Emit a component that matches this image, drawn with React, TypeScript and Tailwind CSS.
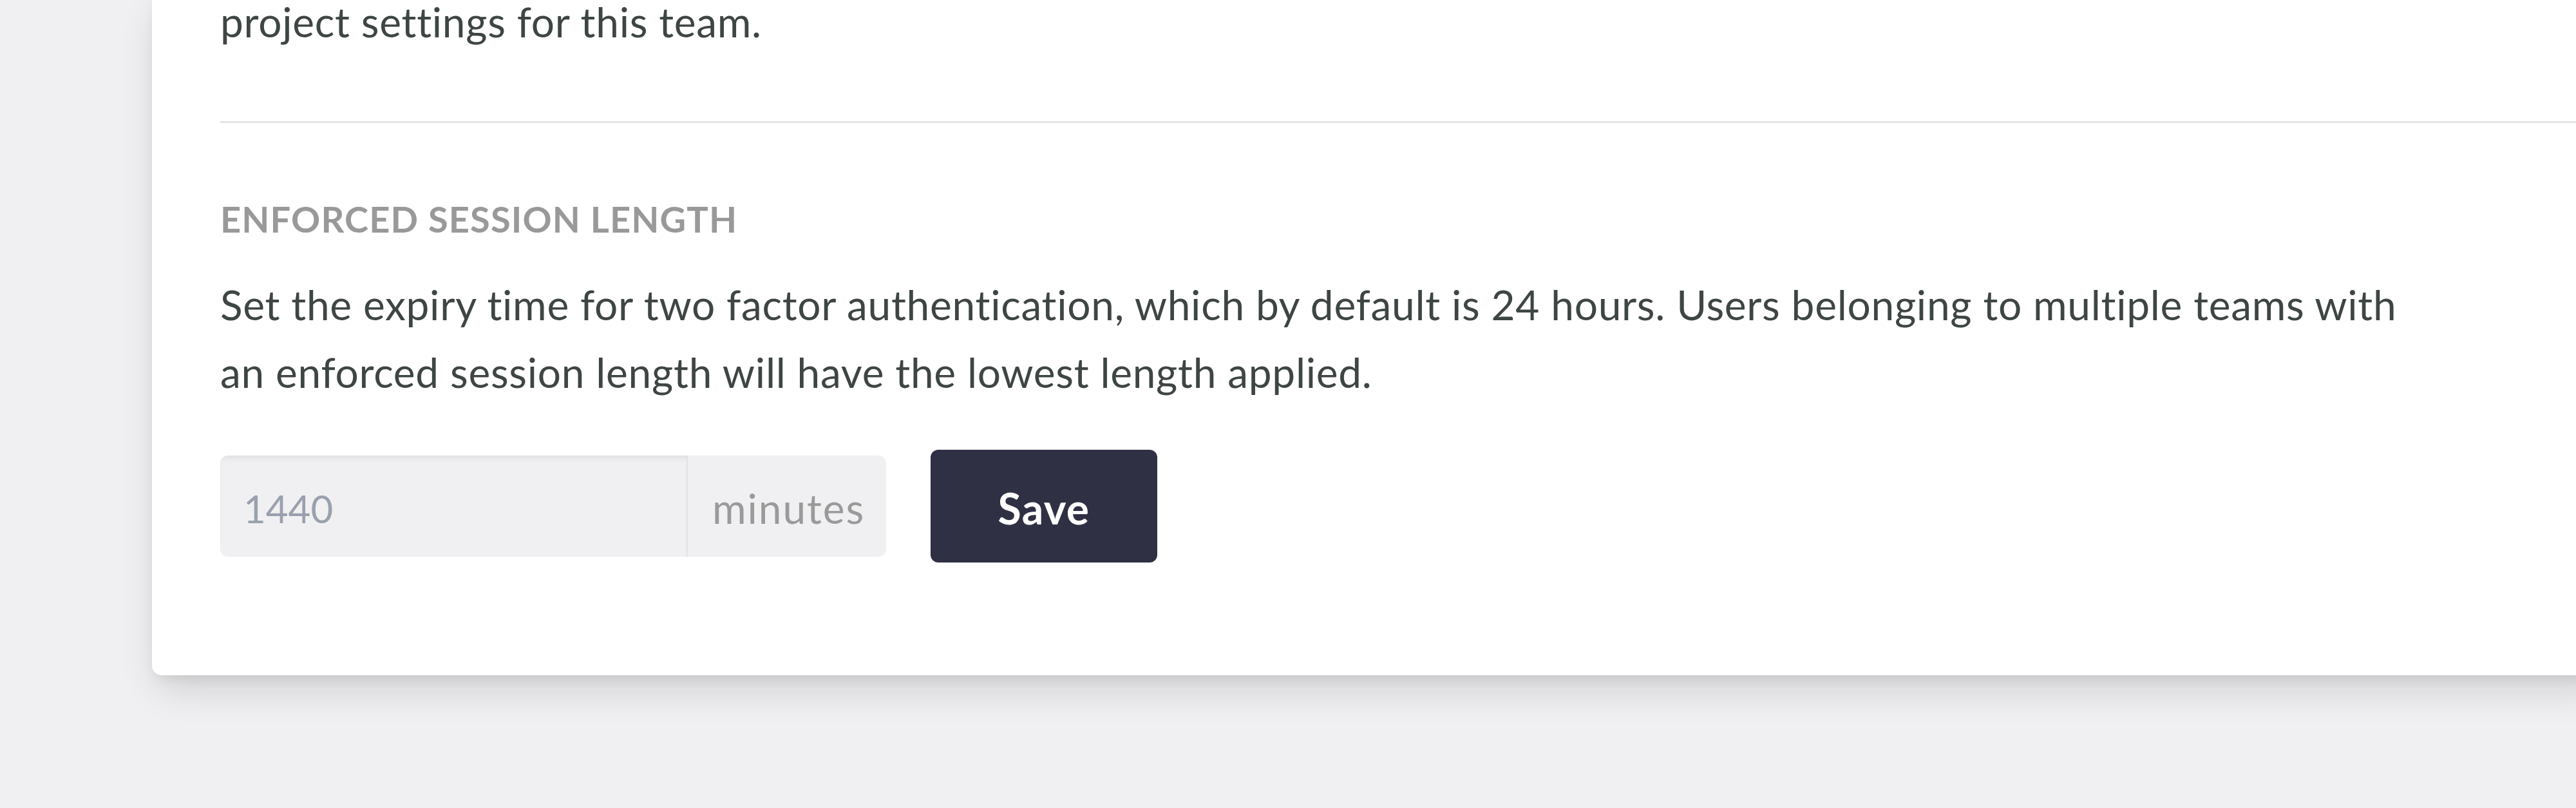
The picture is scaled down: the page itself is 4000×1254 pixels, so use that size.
import React from "react";

const SessionLength = () => {
  return (
    <div className="pt-[121px]">
      <h3 className="text-[56px] leading-none font-bold tracking-[0.02em] uppercase text-[#999999]">
        Enforced session length
      </h3>
      <p className="mt-[52px] w-[3420px] text-[64px] leading-[105px] tracking-[0.011em] text-[#3e4643]">
        Set the expiry time for two factor authentication, which by default is 24 hours. Users belonging to multiple
        teams with an enforced session length will have the lowest length applied.
      </p>
      <div className="mt-[68px] flex items-center gap-[69px]">
        <div className="flex h-[157px] overflow-hidden rounded-[12px] bg-[#f0f0f2]">
          <div className="flex w-[724px] items-center pl-[36px] pt-[6px] text-[60px] leading-none text-[#9aa1ad] shadow-[inset_0_8px_10px_-4px_rgba(0,0,0,0.07)]">
            1440
          </div>
          <div className="flex w-[310px] items-center border-l-2 border-[#e2e2e5] pl-[38px] pt-[6px] text-[64px] leading-none tracking-[0.03em] text-[#9a9a9a]">
            minutes
          </div>
        </div>
        <button className="flex h-[175px] w-[352px] items-center justify-center rounded-[12px] bg-[#2f3044] pt-[6px] text-[66px] font-bold leading-none tracking-[0.02em] text-white">
          Save
        </button>
      </div>
    </div>
  );
};

export default function App() {
  return (
    <div
      className="h-[1254px] w-full overflow-hidden bg-[#f0f0f2]"
      style={{ fontFamily: "Lato, 'Open Sans', sans-serif" }}
    >
      <div className="-mr-[60px] ml-[236px] rounded-b-[15px] bg-white pb-[175px] pl-[106px] shadow-[0_30px_60px_-10px_rgba(0,0,0,0.14),0_10px_20px_-6px_rgba(0,0,0,0.08)]">
        <div className="border-b-[3px] border-[#e4e4e4] pb-[102px]">
          <p className="-mt-[19px] text-[64px] leading-[105px] tracking-[0.011em] text-[#3e4643]">
            project settings for this team.
          </p>
        </div>
        <SessionLength />
      </div>
    </div>
  );
}
